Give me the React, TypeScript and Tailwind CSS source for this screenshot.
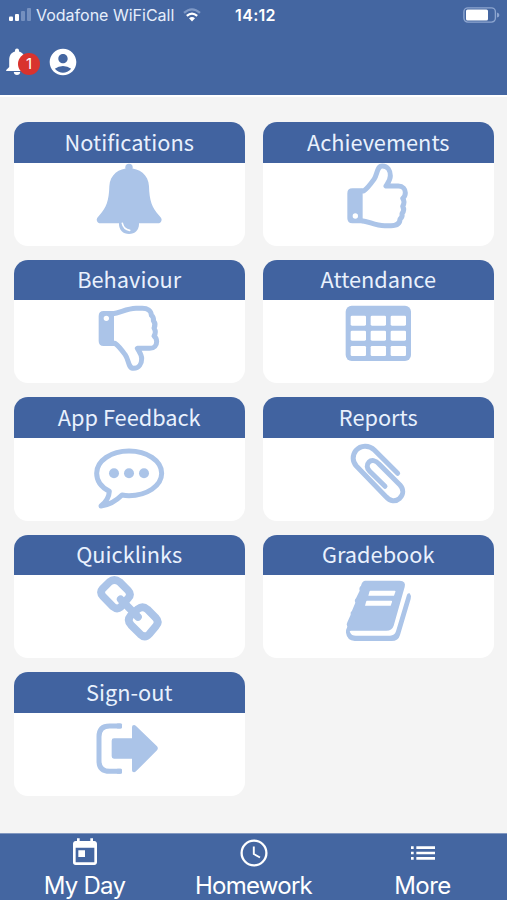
import type { ReactNode } from "react";
import { MdToday, MdAccountCircle, MdList } from "react-icons/md";

const Bell = () => (
  <svg className="h-[83px] w-20 shrink-0" viewBox="267 158 240 249" fill="#abc4e8">
    <circle cx="387" cy="171" r="11" />
    <path d="M387 174C417 174 446 193 447 228C448 270 456 294 478 316Q485 323 485 328Q484 339 472 339H303Q291 339 290 328Q290 323 297 316C319 294 327 270 328 228C329 193 358 174 387 174Z" />
    <path d="M357 335H417V341C417 359 405 371 387 371C369 371 357 359 357 341Z" />
    <path d="M367 339Q371 357 389 360" fill="none" stroke="#fff" strokeWidth="5" strokeLinecap="round" />
  </svg>
);

const ThumbUp = () => (
  <svg className="h-[83px] w-20 shrink-0" viewBox="252 158 240 249">
    <path d="M323 242H329C341 234 350 221 360 207C371 192 368 167 385 167C401 167 409 181 409 196C409 209 401 218 396 227H433C447 227 454 237 454 247C454 254 451 260 446 264Q454 275 446 288Q453 299 444 310Q446 320 438 326C438 341 426 346 411 346H392C363 346 345 333 323 331" fill="none" stroke="#abc4e8" strokeWidth="15" strokeLinejoin="round" />
    <path fillRule="evenodd" fill="#abc4e8" d="M295 234H326V339H295Q280 339 280 324V249Q280 234 295 234ZM312 317A8 8 0 1 0 296 317A8 8 0 1 0 312 317Z" />
  </svg>
);

const ThumbDown = () => (
  <svg className="h-[83px] w-20 shrink-0" viewBox="267 150 240 249">
    <path d="M338 280H345C357 288 366 301 376 315C387 330 384 355 401 355C417 355 425 341 425 326C425 313 417 304 412 295H449C463 295 470 285 470 275C470 268 467 262 462 258Q470 247 462 234Q469 223 460 212Q462 202 454 196C454 181 442 175 427 175H408C379 176 361 188 338 191" fill="none" stroke="#abc4e8" strokeWidth="15" strokeLinejoin="round" />
    <path fillRule="evenodd" fill="#abc4e8" d="M311 183H342V288H311Q296 288 296 273V198Q296 183 311 183ZM327 205A8 8 0 1 0 311 205A8 8 0 1 0 327 205Z" />
  </svg>
);

const Table = () => (
  <svg className="h-[83px] w-20 shrink-0" viewBox="252 150 240 249">
    <rect x="275" y="167" width="196" height="166" rx="18" fill="#abc4e8" />
    {[197, 242, 288].map((y) =>
      [290, 350, 410].map((x) => <rect key={`${x}-${y}`} x={x} y={y} width="46" height="30" rx="4" fill="#fff" />)
    )}
  </svg>
);

const Chat = () => (
  <svg className="h-[83px] w-20 shrink-0" viewBox="267 143 240 249">
    <path d="M387 182C440 182 485 211 485 249C485 287 440 316 387 316Q376 316 366 314C348 332 329 344 303 347C319 334 327 322 328 303C304 291 290 271 290 249C290 211 334 182 387 182Z" fill="none" stroke="#abc4e8" strokeWidth="15" strokeLinejoin="round" />
    <g fill="#abc4e8">
      <circle cx="342" cy="249" r="15" />
      <circle cx="387" cy="249" r="15" />
      <circle cx="432" cy="249" r="15" />
    </g>
  </svg>
);

const Clip = () => (
  <svg className="h-[83px] w-20 shrink-0" viewBox="252 143 240 249">
    <path d="M431 249L361 179C345 163 320 164 306 180C294 195 295 214 307 227L396 319C408 334 425 335 437 324C449 312 449 296 438 284L375 221C365 209 352 208 345 215C337 223 338 234 347 243L393 288" fill="none" stroke="#abc4e8" strokeWidth="15" strokeLinejoin="round" strokeLinecap="round" />
  </svg>
);

const Chain = () => (
  <svg className="h-[83px] w-20 shrink-0" viewBox="267 135 240 249">
    <g fill="none" stroke="#abc4e8" strokeWidth="23">
      <path d="M359 156L384 181Q395 193 385 204L362 231Q351 240 339 230L309 199Q298 187 308 176L328 156Q343 144 359 156Z" />
      <path d="M442 238L467 263Q479 276 468 288L448 312Q435 326 421 313L393 285Q380 271 391 258L414 237Q428 226 442 238Z" />
      <path d="M362 208L414 261" strokeLinecap="round" />
    </g>
  </svg>
);

const Book = () => (
  <svg className="h-[83px] w-20 shrink-0" viewBox="252 135 240 249">
    <path d="M333 152H437Q457 153 452 171L419 287Q414 302 397 302H291Q285 302 289 308Q292 317 306 317H408Q422 317 426 304L459 194Q461 188 467 190Q472 195 470 207L438 315Q433 333 413 333H302Q279 331 276 308Q275 299 280 290Q276 282 280 277L290 254Q288 247 294 242L304 218Q300 210 306 205L317 182Q314 173 321 167Q324 154 333 152Z" fill="#abc4e8" />
    <path d="M349 182H422Q426 182 424 186L420 197H343L346 186Q347 182 349 182ZM339 212H412Q415 212 414 216L410 227H333L336 216Q337 212 339 212Z" fill="#fff" />
  </svg>
);

const SignOut = () => (
  <svg className="h-[83px] w-20 shrink-0" viewBox="267 143 240 249">
    <path d="M362 182H329Q297 182 297 214V287Q297 318 329 318H362" fill="none" stroke="#abc4e8" strokeWidth="15" />
    <rect x="350" y="174.500" width="16" height="15" rx="3" fill="#abc4e8" />
    <rect x="350" y="310.500" width="16" height="15" rx="3" fill="#abc4e8" />
    <path d="M396 185Q396 179 402 179Q405 179 408 182L471 243Q476 249 471 255L408 318Q405 321 402 321Q396 321 396 315V280H342Q335 280 335 273V226Q335 219 342 219H396Z" fill="#abc4e8" />
  </svg>
);

const cards: { title: string; icon: ReactNode }[] = [
  { title: "Notifications", icon: <Bell /> },
  { title: "Achievements", icon: <ThumbUp /> },
  { title: "Behaviour", icon: <ThumbDown /> },
  { title: "Attendance", icon: <Table /> },
  { title: "App Feedback", icon: <Chat /> },
  { title: "Reports", icon: <Clip /> },
  { title: "Quicklinks", icon: <Chain /> },
  { title: "Gradebook", icon: <Book /> },
  { title: "Sign-out", icon: <SignOut /> },
];

function StatusBar() {
  return (
    <div className="grid h-[30px] grid-cols-[1fr_auto_1fr] items-center pr-[7px] pl-2 text-[16px] text-[#e6eefb]">
      <div className="flex items-center">
        <svg className="h-[14px] w-6" viewBox="0 0 24 14">
          <rect x="1" y="8.5" width="4" height="4.5" rx="1" fill="#fff" />
          <rect x="7" y="6" width="4" height="7" rx="1" fill="#fff" />
          <rect x="13" y="3" width="4" height="10" rx="1" fill="#7590bf" />
          <rect x="19" y="0" width="4" height="13" rx="1" fill="#7590bf" />
        </svg>
        <span className="ml-1 w-[139px] whitespace-nowrap">Vodafone WiFiCall</span>
        <svg className="ml-2 h-[14px] w-[18px]" viewBox="0 0 18 14" fill="none" strokeWidth="2.2">
          <path d="M1 4.8Q9 -2.2 17 4.8" stroke="#7f99c6" />
          <path d="M3.8 7.9Q9 3.4 14.2 7.9" stroke="#fff" />
          <path d="M6 10.3Q9 7.700 12 10.3L9 13.6Z" fill="#fff" />
        </svg>
      </div>
      <span className="pl-[3px] font-semibold tracking-[0.3px] text-white">14:12</span>
      <svg className="h-4 w-[37px] justify-self-end" viewBox="0 0 37 16">
        <rect x="0.9" y="0.9" width="31.5" height="14.2" rx="4" fill="none" stroke="#8da5cf" strokeWidth="1.4" />
        <rect x="3" y="2.6" width="22" height="10.8" rx="1.5" fill="#fff" />
        <path d="M34 5.5Q36.4 6 36.4 8Q36.4 10 34 10.5Z" fill="#8da5cf" />
      </svg>
    </div>
  );
}

export default function App() {
  return (
    <div className="flex h-[900px] w-[507px] flex-col overflow-hidden bg-[#f4f4f4] font-['Inter','Liberation_Sans',sans-serif]">
      <header className="h-[97px] shrink-0 border-b-2 border-white bg-[#4466a1]">
        <StatusBar />
        <div className="flex h-16 items-center pl-[5px]">
          <div className="relative h-8 w-9">
            <svg className="h-8 w-6" viewBox="0 0 24 32" fill="#fff">
              <path d="M12 2.5a2 2 0 0 1 2 2v1c4 1 5.800 4.400 5.800 8.500v7l3 3v1H1.200v-1l3-3v-7c0-4.100 1.800-7.500 5.800-8.500v-1a2 2 0 0 1 2-2ZM8.800 26h6.400c0 1.700-1.400 3-3.200 3s-3.200-1.300-3.200-3Z" />
            </svg>
            <span className="absolute top-[7px] left-[13px] flex size-[22px] items-center justify-center rounded-full bg-[#d9332e] text-[15px] text-white">1</span>
          </div>
          <MdAccountCircle className="ml-[6px] size-8 text-white" />
        </div>
      </header>

      <main className="grid shrink-0 grid-cols-[230.5px_230.5px] gap-x-[18.5px] gap-y-[14px] pt-[25px] pl-[14px]">
        {cards.map((c) => (
          <section key={c.title} className="h-[123.5px] overflow-hidden rounded-[14px] bg-white">
            <h2 className="flex h-[40.5px] items-center justify-center bg-[#4163a0] pb-[1.5px] font-['Noto_Sans_CJK_SC','Noto_Sans',sans-serif] text-[21.75px] leading-none text-[#e9f1fd]">
              {c.title}
            </h2>
            <div className="flex justify-center">{c.icon}</div>
          </section>
        ))}
      </main>

      <nav className="mt-auto grid h-[67px] shrink-0 grid-cols-3 border-t border-[#8298c0] bg-[#4466a1] text-[24px] tracking-[-0.75px] text-white">
        <div className="flex flex-col items-center">
          <MdToday className="mt-[3px] size-8" />
          <span className="leading-[34px]">My Day</span>
        </div>
        <div className="flex flex-col items-center">
          <svg className="mt-[3px] size-8" viewBox="0 0 32 32" fill="none" stroke="#fff">
            <circle cx="16" cy="16" r="12.400" strokeWidth="2.300" />
            <path d="M15.800 9.500V17L22 20.500" strokeWidth="1.900" />
          </svg>
          <span className="leading-[34px]">Homework</span>
        </div>
        <div className="flex flex-col items-center">
          <MdList className="mt-[3px] size-8" />
          <span className="leading-[34px] tracking-[-0.5px]">More</span>
        </div>
      </nav>
    </div>
  );
}
